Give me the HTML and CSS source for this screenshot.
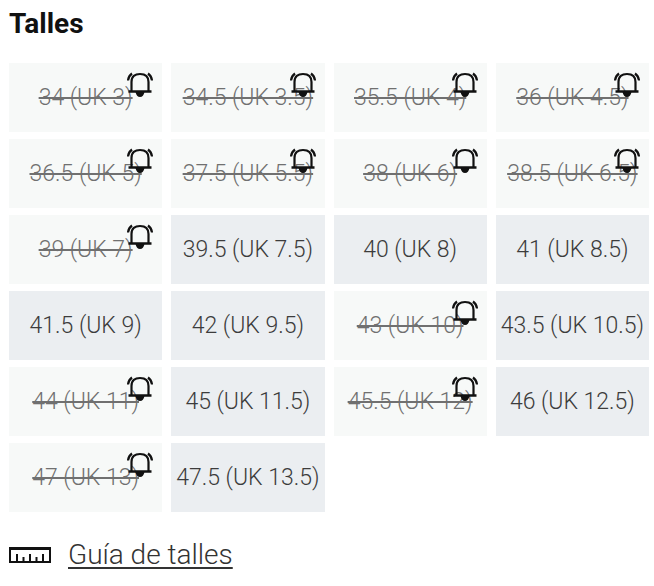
FILE: index.html
```html
<!DOCTYPE html>
<html lang="es">
<head>
<meta charset="utf-8">
<meta name="viewport" content="width=device-width, initial-scale=1">
<title>Talles</title>
<link rel="stylesheet" href="styles.css">
</head>
<body>
<svg class="sprite" aria-hidden="true">
  <symbol id="bell" viewBox="0 0 26 26">
    <g fill="none" stroke="#111" stroke-width="2.200">
      <path d="M4.500 19V10C4.500 4.500 8 2 13 2S21.500 4.500 21.500 10V19"/>
      <path d="M1.500 19.500H24.500" stroke-width="2.500"/>
      <path d="M1 8.500Q1.500 4 5 1.500M25 8.500Q24.500 4 21 1.500"/>
    </g>
    <path d="M8.500 20H17.500Q16.500 25 13 25T8.500 20Z" fill="#111"/>
  </symbol>
</svg>
<main class="sizes">
  <h2 class="title">Talles</h2>
  <div class="grid">
    <button class="size out" type="button"><s>34 (UK 3)</s><svg class="bell"><use href="#bell"/></svg></button>
    <button class="size out" type="button"><s>34.5 (UK 3.5)</s><svg class="bell"><use href="#bell"/></svg></button>
    <button class="size out" type="button"><s>35.5 (UK 4)</s><svg class="bell"><use href="#bell"/></svg></button>
    <button class="size out" type="button"><s>36 (UK 4.5)</s><svg class="bell"><use href="#bell"/></svg></button>
    <button class="size out" type="button"><s>36.5 (UK 5)</s><svg class="bell"><use href="#bell"/></svg></button>
    <button class="size out" type="button"><s>37.5 (UK 5.5)</s><svg class="bell"><use href="#bell"/></svg></button>
    <button class="size out" type="button"><s>38 (UK 6)</s><svg class="bell"><use href="#bell"/></svg></button>
    <button class="size out" type="button"><s>38.5 (UK 6.5)</s><svg class="bell"><use href="#bell"/></svg></button>
    <button class="size out" type="button"><s>39 (UK 7)</s><svg class="bell"><use href="#bell"/></svg></button>
    <button class="size" type="button">39.5 (UK 7.5)</button>
    <button class="size" type="button">40 (UK 8)</button>
    <button class="size" type="button">41 (UK 8.5)</button>
    <button class="size" type="button">41.5 (UK 9)</button>
    <button class="size" type="button">42 (UK 9.5)</button>
    <button class="size out" type="button"><s>43 (UK 10)</s><svg class="bell"><use href="#bell"/></svg></button>
    <button class="size" type="button">43.5 (UK 10.5)</button>
    <button class="size out" type="button"><s>44 (UK 11)</s><svg class="bell"><use href="#bell"/></svg></button>
    <button class="size" type="button">45 (UK 11.5)</button>
    <button class="size out" type="button"><s>45.5 (UK 12)</s><svg class="bell"><use href="#bell"/></svg></button>
    <button class="size" type="button">46 (UK 12.5)</button>
    <button class="size out" type="button"><s>47 (UK 13)</s><svg class="bell"><use href="#bell"/></svg></button>
    <button class="size" type="button">47.5 (UK 13.5)</button>
  </div>
  <div class="guide">
    <svg class="ruler" viewBox="0 0 42 18" aria-hidden="true">
      <path d="M1 2V16H41V2M8 16V8M14.500 16V11M21 16V8M27.500 16V11M34 16V8" fill="none" stroke="#111" stroke-width="2"/>
      <path d="M0 2.500H42" stroke="#111" stroke-width="3"/>
    </svg>
    <a class="link" href="#guia">Guía de talles</a>
  </div>
</main>
</body>
</html>
```
FILE: styles.css
```css
body {
  margin: 0;
  background: #fff;
  color: #222;
  font-family: Roboto, "Liberation Sans", sans-serif;
}

.sprite {
  display: none;
}

.sizes {
  padding: 8px 5px 0 9px;
}

.title {
  margin: 0 0 23px;
  color: #111;
  font-size: 28px;
  font-weight: 700;
  line-height: 32px;
}

.grid {
  display: grid;
  grid-template-columns: repeat(4, 1fr);
  gap: 7px 9px;
}

.size {
  position: relative;
  height: 69px;
  padding: 0;
  border: 0;
  background: #ebeef1;
  color: #3c3c3c;
  font-family: inherit;
  font-size: 23px;
  font-weight: 300;
  white-space: nowrap;
}

.out {
  background: #f7f9f8;
  color: #707070;
}

.bell {
  position: absolute;
  top: 9px;
  right: 9px;
  width: 26px;
  height: 26px;
}

.guide {
  display: flex;
  align-items: center;
  gap: 17px;
  margin-top: 27px;
}

.ruler {
  width: 42px;
  height: 18px;
}

.link {
  color: #333;
  font-size: 28px;
  font-weight: 300;
  line-height: 32px;
  text-decoration-thickness: 2px;
  text-underline-offset: 3px;
}
```
